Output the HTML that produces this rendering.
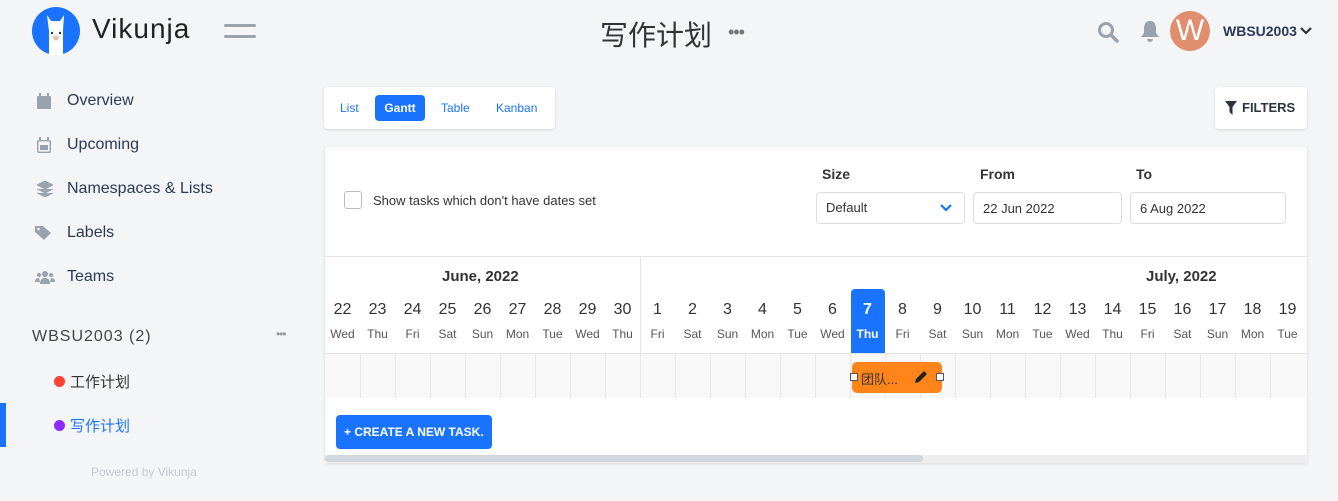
<!DOCTYPE html>
<html><head><meta charset="utf-8"><style>
*{box-sizing:border-box;margin:0;padding:0}
body{width:1338px;height:501px;background:#f4f5f7;font-family:"Liberation Sans","Noto Sans CJK SC",sans-serif;color:#2b3540;position:relative;overflow:hidden}
.a{position:absolute}
.nav{font-size:16px;color:#2b3a55}
.nav svg{position:absolute;left:-30px;top:1px}
.card{background:#fff;border-radius:4px;box-shadow:0 1px 3px rgba(0,0,0,.12)}
.col{position:absolute;width:35px;text-align:center}
.dn{top:301px;font-size:16px;color:#333}
.wd{top:327px;font-size:12px;color:#555}
.cell{position:absolute;top:353px;height:45px;width:35px;border-left:1px solid #e8e8e8}
</style></head><body>
<!-- logo -->
<svg class="a" style="left:32px;top:7px" width="48" height="48" viewBox="0 0 48 48"><circle cx="24" cy="24" r="24" fill="#1973ff"/><path d="M17 48 V24 L15 8 L19 14 H28 L32 8 L31 24 V48Z" fill="#fff"/><circle cx="20" cy="26" r="1.2" fill="#333"/><circle cx="28" cy="26" r="1.2" fill="#333"/><ellipse cx="24" cy="31" rx="3" ry="2.5" fill="#d9c7b8"/></svg>
<div class="a" style="left:92px;top:13px;font-size:28px;letter-spacing:1px;color:#222">Vikunja</div>
<div class="a" style="left:224px;top:24px;width:32px;height:3px;background:#9aa3ad;border-radius:2px"></div>
<div class="a" style="left:224px;top:35px;width:32px;height:3px;background:#9aa3ad;border-radius:2px"></div>
<div class="a" style="left:600px;top:14px;font-size:28px;color:#333">写作计划</div>
<div class="a" style="left:728px;top:22px;font-size:18px;color:#777;letter-spacing:-1px">•••</div>
<!-- right header -->
<svg class="a" style="left:1097px;top:21px" width="22" height="22" viewBox="0 0 22 22"><circle cx="9" cy="9" r="6.5" fill="none" stroke="#9aa3ad" stroke-width="3"/><path d="M14 14 L20 20" stroke="#9aa3ad" stroke-width="3.5" stroke-linecap="round"/></svg>
<svg class="a" style="left:1140px;top:20px" width="20" height="22" viewBox="0 0 20 22"><path d="M10 1 C5 1 4 5 4 9 V13 L1 17 H19 L16 13 V9 C16 5 15 1 10 1Z M7 19 A3 3 0 0 0 13 19Z" fill="#9aa3ad"/></svg>
<div class="a" style="left:1170px;top:11px;width:40px;height:40px;border-radius:50%;background:#e08e6e;color:#fff;font-size:30px;text-align:center;line-height:40px">W</div>
<div class="a" style="left:1223px;top:23px;font-size:14px;font-weight:bold;color:#2b3a55">WBSU2003</div>
<svg class="a" style="left:1300px;top:27px" width="12" height="8"><path d="M1 1 L6 6 L11 1" fill="none" stroke="#333" stroke-width="2.2"/></svg>
<!-- sidebar -->
<div class="a nav" style="left:67px;top:92px"><svg width="14" height="16"><rect x="0" y="3" width="14" height="13" rx="1" fill="#9aa3ad"/><rect x="2" y="0" width="2" height="4" fill="#9aa3ad"/><rect x="10" y="0" width="2" height="4" fill="#9aa3ad"/></svg>Overview</div>
<div class="a nav" style="left:67px;top:136px"><svg width="14" height="16"><rect x="0.7" y="3.7" width="12.6" height="11.6" rx="1" fill="none" stroke="#9aa3ad" stroke-width="1.4"/><rect x="3" y="8" width="8" height="5" fill="#9aa3ad"/><rect x="2" y="0" width="2" height="4" fill="#9aa3ad"/><rect x="10" y="0" width="2" height="4" fill="#9aa3ad"/></svg>Upcoming</div>
<div class="a nav" style="left:67px;top:180px"><svg width="16" height="16"><path d="M8 0 L16 4 L8 8 L0 4Z M0 8 L8 12 L16 8 M0 12 L8 16 L16 12" fill="#9aa3ad" stroke="#9aa3ad"/></svg>Namespaces &amp; Lists</div>
<div class="a nav" style="left:67px;top:224px"><svg width="20" height="16" style="left:-32px"><path d="M0 1 H8 L16 8 L9 15 L0 7Z" fill="#9aa3ad"/><circle cx="3.5" cy="4" r="1.3" fill="#f4f5f7"/></svg>Labels</div>
<div class="a nav" style="left:67px;top:268px"><svg width="20" height="16" style="left:-32px"><circle cx="10" cy="5" r="3" fill="#9aa3ad"/><circle cx="4" cy="6" r="2" fill="#9aa3ad"/><circle cx="16" cy="6" r="2" fill="#9aa3ad"/><path d="M5 15 Q5 9 10 9 Q15 9 15 15Z M0 13 Q0 9 4 9 L5 13Z M20 13 Q20 9 16 9 L15 13Z" fill="#9aa3ad"/></svg>Teams</div>
<div class="a" style="left:32px;top:328px;font-size:16px;letter-spacing:1px;color:#444">WBSU2003 (2)</div>
<div class="a" style="left:276px;top:327px;font-size:12px;color:#999;letter-spacing:-1px">•••</div>
<div class="a" style="left:54px;top:376px;width:11px;height:11px;border-radius:50%;background:#ff4136"></div>
<div class="a" style="left:70px;top:371px;font-size:15px;color:#333">工作计划</div>
<div class="a" style="left:0;top:403px;width:6px;height:44px;background:#1973ff"></div>
<div class="a" style="left:54px;top:420px;width:11px;height:11px;border-radius:50%;background:#8c2cff"></div>
<div class="a" style="left:70px;top:415px;font-size:15px;color:#1973ff">写作计划</div>
<div class="a" style="left:91px;top:465px;font-size:12px;color:#c5c9ce">Powered by Vikunja</div>
<!-- tabs -->
<div class="a card" style="left:324px;top:87px;width:231px;height:42px"></div>
<div class="a" style="left:340px;top:101px;font-size:12px;color:#1973ff">List</div>
<div class="a" style="left:375px;top:95px;width:50px;height:26px;background:#1973ff;border-radius:4px;color:#fff;font-size:12px;font-weight:bold;text-align:center;line-height:26px">Gantt</div>
<div class="a" style="left:441px;top:101px;font-size:12px;color:#1973ff">Table</div>
<div class="a" style="left:496px;top:101px;font-size:12px;color:#1973ff">Kanban</div>
<div class="a card" style="left:1215px;top:87px;width:92px;height:42px"></div>
<svg class="a" style="left:1225px;top:101px" width="12" height="14"><path d="M0 0 H12 L7.5 6 V14 L4.5 11 V6Z" fill="#2b3540"/></svg>
<div class="a" style="left:1242px;top:100px;font-size:13px;font-weight:bold;color:#2b3540">FILTERS</div>
<!-- main card -->
<div class="a card" style="left:325px;top:147px;width:982px;height:316px"></div>
<div class="a" style="left:344px;top:191px;width:18px;height:18px;border:1px solid #bbb;border-radius:3px;background:#fff"></div>
<div class="a" style="left:373px;top:193px;font-size:13px;color:#333">Show tasks which don't have dates set</div>
<div class="a" style="left:822px;top:166px;font-size:14px;font-weight:bold;color:#333">Size</div>
<div class="a" style="left:980px;top:166px;font-size:14px;font-weight:bold;color:#333">From</div>
<div class="a" style="left:1136px;top:166px;font-size:14px;font-weight:bold;color:#333">To</div>
<div class="a" style="left:816px;top:192px;width:149px;height:32px;border:1px solid #ddd;border-radius:4px;font-size:13px;padding:7px 9px;color:#333">Default</div>
<svg class="a" style="left:940px;top:204px" width="12" height="8"><path d="M1 1 L6 6 L11 1" fill="none" stroke="#1973ff" stroke-width="2.2"/></svg>
<div class="a" style="left:973px;top:192px;width:149px;height:32px;border:1px solid #ddd;border-radius:4px;font-size:13px;padding:8px 9px;color:#333">22 Jun 2022</div>
<div class="a" style="left:1130px;top:192px;width:156px;height:32px;border:1px solid #ddd;border-radius:4px;font-size:13px;padding:8px 9px;color:#333">6 Aug 2022</div>
<!-- gantt -->
<div class="a" style="left:325px;top:256px;width:982px;height:1px;background:#e5e5e5"></div>
<div class="a" style="left:640px;top:257px;width:1px;height:96px;background:#e5e5e5"></div>
<div class="a" style="left:442px;top:268px;font-size:15px;font-weight:bold;color:#333">June, 2022</div>
<div class="a" style="left:1146px;top:268px;font-size:15px;font-weight:bold;color:#333">July, 2022</div>
<div class="a" style="left:325px;top:353px;width:982px;height:45px;background:#f8f8f8;border-top:1px solid #e5e5e5"></div>
<div class="a" style="left:851px;top:289px;width:34px;height:64px;background:#1973ff;border-radius:4px 4px 0 0"></div>
<div id="g"></div>
<div class="cell" style="left:360px"></div><div class="cell" style="left:395px"></div><div class="cell" style="left:430px"></div><div class="cell" style="left:465px"></div><div class="cell" style="left:500px"></div><div class="cell" style="left:535px"></div><div class="cell" style="left:570px"></div><div class="cell" style="left:605px"></div><div class="cell" style="left:640px"></div><div class="cell" style="left:675px"></div><div class="cell" style="left:710px"></div><div class="cell" style="left:745px"></div><div class="cell" style="left:780px"></div><div class="cell" style="left:815px"></div><div class="cell" style="left:850px"></div><div class="cell" style="left:885px"></div><div class="cell" style="left:920px"></div><div class="cell" style="left:955px"></div><div class="cell" style="left:990px"></div><div class="cell" style="left:1025px"></div><div class="cell" style="left:1060px"></div><div class="cell" style="left:1095px"></div><div class="cell" style="left:1130px"></div><div class="cell" style="left:1165px"></div><div class="cell" style="left:1200px"></div><div class="cell" style="left:1235px"></div><div class="cell" style="left:1270px"></div>
<div class="col dn" style="left:325px">22</div><div class="col wd" style="left:325px">Wed</div>
<div class="col dn" style="left:360px">23</div><div class="col wd" style="left:360px">Thu</div>
<div class="col dn" style="left:395px">24</div><div class="col wd" style="left:395px">Fri</div>
<div class="col dn" style="left:430px">25</div><div class="col wd" style="left:430px">Sat</div>
<div class="col dn" style="left:465px">26</div><div class="col wd" style="left:465px">Sun</div>
<div class="col dn" style="left:500px">27</div><div class="col wd" style="left:500px">Mon</div>
<div class="col dn" style="left:535px">28</div><div class="col wd" style="left:535px">Tue</div>
<div class="col dn" style="left:570px">29</div><div class="col wd" style="left:570px">Wed</div>
<div class="col dn" style="left:605px">30</div><div class="col wd" style="left:605px">Thu</div>
<div class="col dn" style="left:640px">1</div><div class="col wd" style="left:640px">Fri</div>
<div class="col dn" style="left:675px">2</div><div class="col wd" style="left:675px">Sat</div>
<div class="col dn" style="left:710px">3</div><div class="col wd" style="left:710px">Sun</div>
<div class="col dn" style="left:745px">4</div><div class="col wd" style="left:745px">Mon</div>
<div class="col dn" style="left:780px">5</div><div class="col wd" style="left:780px">Tue</div>
<div class="col dn" style="left:815px">6</div><div class="col wd" style="left:815px">Wed</div>
<div class="col dn" style="left:850px;color:#fff;font-weight:bold">7</div><div class="col wd" style="left:850px;color:#fff;font-weight:bold">Thu</div>
<div class="col dn" style="left:885px">8</div><div class="col wd" style="left:885px">Fri</div>
<div class="col dn" style="left:920px">9</div><div class="col wd" style="left:920px">Sat</div>
<div class="col dn" style="left:955px">10</div><div class="col wd" style="left:955px">Sun</div>
<div class="col dn" style="left:990px">11</div><div class="col wd" style="left:990px">Mon</div>
<div class="col dn" style="left:1025px">12</div><div class="col wd" style="left:1025px">Tue</div>
<div class="col dn" style="left:1060px">13</div><div class="col wd" style="left:1060px">Wed</div>
<div class="col dn" style="left:1095px">14</div><div class="col wd" style="left:1095px">Thu</div>
<div class="col dn" style="left:1130px">15</div><div class="col wd" style="left:1130px">Fri</div>
<div class="col dn" style="left:1165px">16</div><div class="col wd" style="left:1165px">Sat</div>
<div class="col dn" style="left:1200px">17</div><div class="col wd" style="left:1200px">Sun</div>
<div class="col dn" style="left:1235px">18</div><div class="col wd" style="left:1235px">Mon</div>
<div class="col dn" style="left:1270px">19</div><div class="col wd" style="left:1270px">Tue</div>
<!-- task bar -->
<div class="a" style="left:852px;top:362px;width:90px;height:31px;background:#ff851b;border-radius:5px"></div>
<div class="a" style="left:861px;top:369px;font-size:13px;color:#333">团队...</div>
<svg class="a" style="left:914px;top:370px" width="14" height="14"><path d="M1 13 L2 9 L10 1 L13 4 L5 12Z" fill="#222"/></svg>
<div class="a" style="left:850px;top:373px;width:8px;height:8px;background:#fff;border:1px solid #555"></div>
<div class="a" style="left:936px;top:373px;width:8px;height:8px;background:#fff;border:1px solid #555"></div>
<!-- button -->
<div class="a" style="left:336px;top:415px;width:156px;height:34px;background:#1973ff;border-radius:4px;color:#fff;font-size:12px;font-weight:bold;line-height:34px;padding-left:8px">+ CREATE A NEW TASK.</div>
<div class="a" style="left:325px;top:455px;width:982px;height:8px;background:#eee"></div>
<div class="a" style="left:325px;top:455px;width:598px;height:7px;background:#d1d5dc;border-radius:4px"></div>
</body></html>
